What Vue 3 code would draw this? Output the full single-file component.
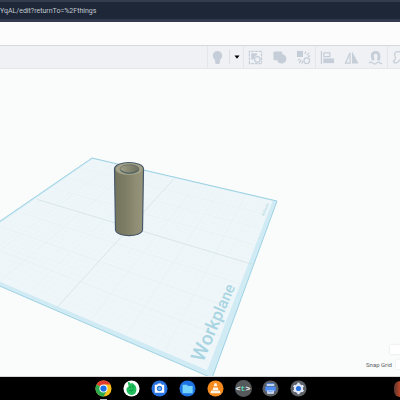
<script setup>
import { ref } from 'vue'

const url = ref('YqAL/edit?returnTo=%2Fthings')

// Corners of the workplane: back, right, front, left.
const corners = [[92, 158], [277, 201], [212, 378], [-58, 261]]

// Projects a point of the unit square onto the workplane in perspective.
function project(u, v) {
  const [[x0, y0], [x1, y1], [x2, y2], [x3, y3]] = corners
  const dx1 = x1 - x2, dx2 = x3 - x2, sx = x0 - x1 + x2 - x3
  const dy1 = y1 - y2, dy2 = y3 - y2, sy = y0 - y1 + y2 - y3
  const det = dx1 * dy2 - dx2 * dy1
  const g = (sx * dy2 - dx2 * sy) / det
  const h = (dx1 * sy - sx * dy1) / det
  const w = g * u + h * v + 1
  return [
    ((x1 - x0 + g * x1) * u + (x3 - x0 + h * x3) * v + x0) / w,
    ((y1 - y0 + g * y1) * u + (y3 - y0 + h * y3) * v + y0) / w
  ]
}

function line(a, b) {
  return 'M' + project(...a).join(' ') + 'L' + project(...b).join(' ')
}

function gridPath(count) {
  let d = ''
  for (let i = 1; i < count; i++) {
    const t = 0.02 + (0.96 * i) / count
    d += line([t, 0.02], [t, 0.98]) + line([0.02, t], [0.98, t])
  }
  return d
}

const outline = corners.map((p) => p.join(',')).join(' ')
const inner = [[0.01, 0.01], [0.982, 0.01], [0.982, 0.984], [0.01, 0.984]]
  .map((p) => project(...p).join(','))
  .join(' ')
const fineGrid = gridPath(40)
const coarseGrid = gridPath(8)
const axes = line([0.5, 0.02], [0.5, 1]) + line([0.02, 0.5], [1, 0.5])

// Letters get smaller as the label runs away from the viewer.
const letterSizes = [20, 19, 18, 18, 17, 16, 16, 15, 15]
const letters = [...'Workplane'].map((char, i) => ({ char, size: letterSizes[i] }))
</script>

<template>
  <div class="screen">
    <header class="address">
      <input v-model="url" class="url" type="text" aria-label="Address" />
    </header>
    <div class="titlebar"></div>

    <nav class="toolbar" aria-label="Tools">
      <div class="group visibility">
        <button type="button" aria-label="Show all">
          <svg viewBox="0 0 16 16"><path class="fill" d="M8 1a5 5 0 0 0-5 5c0 2 1.500 3 2.200 5h5.600C11.500 9 13 8 13 6a5 5 0 0 0-5-5zM5.500 11h5v3L9 15H7l-1.500-1z" /></svg>
        </button>
        <button class="caret" type="button" aria-label="Visibility options">
          <svg viewBox="0 0 6 6"><path d="M.5 1.500h5L3 4.800z" /></svg>
        </button>
      </div>
      <div class="group">
        <button type="button" aria-label="Group bundle">
          <svg viewBox="0 0 16 16"><path class="stroke dash" d="M1.500 3.500v-2h13v2M1.500 12.500v2h13v-2" /><path class="stroke dash" d="M1.500 4v9M14.500 4v9" /><path class="fill" d="M3.500 3.500h6v2A4.500 4.500 0 0 0 6 10H3.500z" /><circle class="stroke" cx="10" cy="10" r="3" /></svg>
        </button>
        <button type="button" aria-label="Group">
          <svg viewBox="0 0 16 16"><path class="fill" d="M2.500 1.500h7q1.500 0 1.500 1.500v1.500a5 5 0 1 1-5.500 6.500H3Q1.500 11 1.500 9.500V3q0-1.500 1-1.500z" /></svg>
        </button>
        <button type="button" aria-label="Ungroup">
          <svg viewBox="0 0 16 16"><path class="fill" d="M1 1h6.500v6.500H1z" /><circle class="stroke" cx="11.500" cy="11.500" r="3" /><path class="stroke" d="M9.500 4l1-2.500M11.500 5.500L14 3M12.500 7l2.500-1M4 9.500L2 11M5.500 10.500L3.500 14M7 11.500l-.5 3" /></svg>
        </button>
      </div>
      <div class="group">
        <button type="button" aria-label="Align">
          <svg viewBox="0 0 16 16"><path class="stroke" d="M1.500 1v14M4 3h6.500v4H4z" /><path class="fill" d="M3.500 9H15v5H3.500z" /></svg>
        </button>
        <button type="button" aria-label="Mirror">
          <svg viewBox="0 0 16 16"><path class="stroke" d="M6.500 3v11h-5z" /><path class="fill" d="M8.500 1.500L15.500 14.500h-7z" /></svg>
        </button>
        <button type="button" aria-label="Cruise">
          <svg viewBox="0 0 16 16"><path class="magnet" d="M5.500 11L4.500 6a3.600 3.600 0 0 1 7-1q.8 2-.5 6" /><path class="stroke" d="M1 14q2-2 4 0t4 0 4 0l2 1" /></svg>
        </button>
      </div>
      <div class="group last">
        <button type="button" aria-label="Sketch">
          <svg viewBox="0 0 16 16"><path class="stroke" d="M8 2C5 1 2 3 3 6s1 4-1.500 6c1 3 4 2 5.500 0l7-6-3-4z" /></svg>
        </button>
      </div>
    </nav>

    <main class="stage">
      <svg class="scene" viewBox="0 69 400 307" preserveAspectRatio="xMinYMin slice" role="img" aria-label="Workplane with a tube">
        <defs>
          <linearGradient id="tube-side">
            <stop offset="0" stop-color="#74745d" />
            <stop offset=".4" stop-color="#7e7e66" />
            <stop offset=".7" stop-color="#8e8d73" />
            <stop offset="1" stop-color="#96957b" />
          </linearGradient>
          <linearGradient id="tube-bore">
            <stop offset="0" stop-color="#a09f86" />
            <stop offset=".5" stop-color="#858670" />
            <stop offset="1" stop-color="#6c705f" />
          </linearGradient>
        </defs>
        <polygon class="border" :points="outline" />
        <polygon class="plane" :points="inner" />
        <path class="fine" :d="fineGrid" />
        <path class="coarse" :d="coarseGrid" />
        <path class="axes" :d="axes" />
        <text class="label" transform="translate(203 363) rotate(-67)"><tspan v-for="(letter, i) in letters" :key="i" :font-size="letter.size">{{ letter.char }}</tspan></text>
        <text class="maker" transform="translate(264 216) rotate(-67)">Kilimer</text>
        <path class="tube" d="M114.500 169C114.500 160.500 143.500 160.500 143.500 169L142.500 230C141 237.500 117 237.500 115.500 230z" />
        <ellipse class="rim" cx="129" cy="169" rx="13.500" ry="6" />
        <ellipse class="bore" cx="129.500" cy="169" rx="9.500" ry="4.300" />
        <path class="depth" d="M120.500 170.500Q129 176 138.500 170.500" />
      </svg>
      <div class="settings">
        <button class="edit-grid" type="button" aria-label="Edit grid"></button>
        <div class="snap">
          <label for="snap-grid">Snap Grid</label>
          <input id="snap-grid" type="text" />
        </div>
      </div>
    </main>

    <footer class="shelf">
      <nav class="apps" aria-label="Apps">
        <button class="active" type="button" aria-label="Chrome">
          <svg viewBox="0 0 18 18"><circle cx="9" cy="9" r="8.500" fill="#fbc116" /><path d="M9 9L1.640 4.750A8.500 8.500 0 0 1 16.360 4.750H9z" fill="#e33b2e" /><path d="M9 9L1.640 4.750A8.500 8.500 0 0 0 9 17.500l3.700-6.400z" fill="#2da94f" /><circle cx="9" cy="9" r="4.300" fill="#fff" /><circle cx="9" cy="9" r="3.300" fill="#1a6fe8" /></svg>
        </button>
        <button type="button" aria-label="Beans">
          <svg viewBox="0 0 18 18"><circle cx="9" cy="9" r="8.500" fill="#fff" /><path d="M5 2.500q2-1 3 1.500 2-2 4 1c3 2 3 8 0 10q-4 2-7-1C2.500 10 4 8 6 7z" fill="#20bf5c" /><path d="M7.500 6.500v2M10.500 6v2M7 11q2 1.500 4-1" fill="none" stroke="#07863a" /></svg>
        </button>
        <button type="button" aria-label="Camera">
          <svg viewBox="0 0 18 18"><circle cx="9" cy="9" r="8.500" fill="#2872df" /><path d="M6.500 5l1-1.300h3L11.500 5H14v8.500H4V5z" fill="#fff" /><circle cx="9" cy="9" r="2.800" fill="#2872df" /><circle cx="9" cy="9" r="1.600" fill="#79b8f8" /></svg>
        </button>
        <button type="button" aria-label="Files">
          <svg viewBox="0 0 18 18"><circle cx="9" cy="9" r="8.500" fill="#1e73e2" /><path d="M3.800 5h4.500l1.200 1.300h5V14H3.800z" fill="#73d3fb" /></svg>
        </button>
        <button type="button" aria-label="VLC">
          <svg viewBox="0 0 18 18"><circle cx="9" cy="9" r="8.500" fill="#f58a1d" /><path d="M8 3.500h2l1 3H7zM6.600 8h4.800l.7 2.500H5.900zM4.500 11h9l1 3h-11z" fill="#fff4e6" /></svg>
        </button>
        <button class="terminal" type="button" aria-label="Text editor"><span>&lt;</span><b>t</b><span>&gt;</span></button>
        <button type="button" aria-label="Print">
          <svg viewBox="0 0 18 18"><circle cx="9" cy="9" r="8.500" fill="#5b5e63" /><path d="M5 3.500h8V6H5zM3.500 7h11v5h-11z" fill="#4d8df4" /><path d="M5 4.500h8V6H5zM5.500 11h7v3.500h-7z" fill="#e4edfc" /><path d="M6.500 12.500h5" stroke="#4d8df4" /></svg>
        </button>
        <button type="button" aria-label="Settings">
          <svg viewBox="0 0 18 18"><circle cx="9" cy="9" r="8.500" fill="#5f6267" /><circle cx="9" cy="9" r="4.800" fill="#e4ecfa" /><path d="M9 3v12M3.800 6l10.400 6M3.800 12l10.400-6" stroke="#e4ecfa" stroke-width="2.400" /><circle cx="9" cy="9" r="2.700" fill="#2871dc" /></svg>
        </button>
      </nav>
      <button class="recent" type="button" aria-label="Recent file"></button>
    </footer>
  </div>
</template>

<style>
body {
  margin: 0;
}
</style>

<style scoped>
.screen {
  display: flex;
  flex-direction: column;
  min-height: 100vh;
  overflow: hidden;
  background: #fafbfb;
  font-family: Roboto, "Noto Sans", sans-serif;
}
button,
input {
  box-sizing: border-box;
  margin: 0;
  padding: 0;
  border: 0;
  background: none;
  font: inherit;
}
button {
  display: flex;
  align-items: center;
  justify-content: center;
}
svg {
  display: block;
}
.address {
  box-sizing: border-box;
  display: flex;
  height: 22px;
  border-top: 2px solid #343d50;
  border-bottom: 3px solid #343a4d;
  background: #1d2737;
}
.url {
  width: 100%;
  padding-top: 1px;
  color: #c2c7cf;
  font-size: 7px;
  line-height: 16px;
}
.titlebar {
  height: 23px;
  background: #fcfcfd;
}
.toolbar {
  box-sizing: border-box;
  display: flex;
  justify-content: flex-end;
  height: 24px;
  overflow: hidden;
  border-top: 1px solid #d5d7db;
  border-bottom: 1px solid #e5e7ea;
  background: #f0f1f4;
}
.group {
  box-sizing: border-box;
  display: flex;
  flex: none;
  align-items: center;
  gap: 8px;
  width: 72px;
  padding: 0 4px 0 3px;
  border-left: 1px solid #e4e7ea;
}
.group button {
  width: 16px;
  height: 16px;
}
.group svg {
  width: 15px;
  height: 15px;
}
.visibility {
  gap: 4px;
  width: 36px;
  padding: 0 0 0 1px;
}
.group .caret {
  width: 14px;
  height: 14px;
  border-left: 1px solid #dcdfe3;
}
.caret svg {
  width: 6px;
  height: 6px;
}
.last {
  width: 13px;
  padding-right: 0;
}
.last button {
  flex: none;
}
.fill {
  fill: #c5ced8;
}
.stroke {
  fill: none;
  stroke: #c5ced8;
  stroke-width: 1.300;
}
.dash {
  stroke-dasharray: 3 1;
}
.magnet {
  fill: none;
  stroke: #c5ced8;
  stroke-width: 3;
}
.stage {
  position: relative;
  display: flex;
  flex: 1;
  align-items: flex-end;
  justify-content: flex-end;
  overflow: hidden;
  border-bottom: 1px solid #d6d7d8;
}
.scene {
  position: absolute;
  inset: 0;
  width: 100%;
  height: 100%;
}
.border {
  fill: #d0ebf4;
  stroke: #9dd2e3;
  stroke-width: 1;
}
.plane {
  fill: #eef6f9;
}
.fine {
  fill: none;
  stroke: #e6f1f4;
  stroke-width: 0.300;
}
.coarse {
  fill: none;
  stroke: #e3eff3;
  stroke-width: 0.400;
}
.axes {
  fill: none;
  stroke: #cfdde3;
  stroke-width: 0.600;
}
.label {
  fill: #a9d5e2;
  font-family: Roboto, sans-serif;
  font-weight: 500;
}
.maker {
  fill: #b9dce7;
  font: bold 4px "Liberation Sans", sans-serif;
}
.tube {
  fill: url(#tube-side);
  stroke: #46586a;
  stroke-width: 1.200;
}
.rim {
  fill: #a3a288;
}
.bore {
  fill: url(#tube-bore);
  stroke: #59665f;
  stroke-width: 0.700;
}
.depth {
  fill: none;
  stroke: #4a6068;
  stroke-width: 1;
}
.settings {
  position: relative;
  display: flex;
  flex-direction: column;
  align-items: flex-end;
  gap: 6px;
  padding-bottom: 7px;
}
.edit-grid {
  width: 10px;
  height: 9px;
  background: #fff;
  box-shadow: 0 0 2px #dcdfe1;
}
.snap {
  display: flex;
  align-items: center;
  gap: 4px;
  color: #5d6268;
  font-size: 6px;
  line-height: 9px;
}
.snap input {
  width: 4px;
  height: 9px;
  background: #fff;
  box-shadow: 0 0 2px #dcdfe1;
}
.shelf {
  display: flex;
  align-items: center;
  height: 23px;
  overflow: hidden;
  background: #000;
}
.apps {
  display: flex;
  flex: 1;
  justify-content: center;
  gap: 10px;
  padding-left: 8px;
}
.apps button {
  position: relative;
  width: 18px;
  height: 18px;
}
.apps svg {
  width: 17px;
  height: 17px;
}
.active::after {
  position: absolute;
  bottom: -2px;
  width: 7px;
  height: 1px;
  background: #b5b5b5;
  content: "";
}
.apps .terminal {
  width: 17px;
  height: 17px;
  border-radius: 50%;
  background: #55595c;
  color: #f0f4f4;
  font: bold 8px "Liberation Mono", monospace;
}
.terminal b {
  color: #55d8b0;
}
.recent {
  width: 6px;
  height: 16px;
  border-radius: 8px 0 0 8px;
  background: linear-gradient(90deg, #55372f, #bd4426);
}
</style>
